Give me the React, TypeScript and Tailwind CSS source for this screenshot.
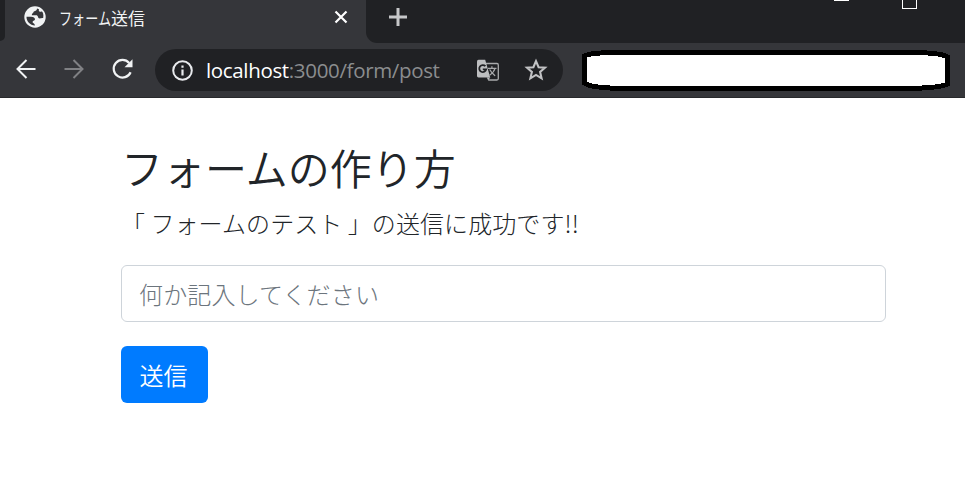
function Globe() {
  return (
    <svg className="h-[22px] w-[22px] shrink-0" viewBox="0 0 22 22">
      <circle cx="11" cy="11" r="10.7" fill="#f1f3f4" />
      <path d="M13 2.6 C13 4.4 11.6 5.2 9.8 5.4 C9.6 7.2 7.5 7.2 7.8 9.3 H12.2 C14.2 9.4 13.7 11.4 14.8 12.3 C16.2 12.8 17.4 11.6 19.2 12 C19.8 8.4 19 6.6 17.8 5.3 C17.2 6.2 15 6 14.8 4.6 C14.8 3.8 14.9 3.4 15 3.2Z" fill="#35363a" />
      <path d="M2.5 10.8 H7 C9.5 11 11.2 11.9 11 13.5 C10.6 15 8.8 14.3 8.6 16 C8.6 17.2 10.4 17 11 19.4 C6 19.3 2.4 15.6 2.5 10.8Z" fill="#35363a" />
    </svg>
  );
}

function Arrow({ className }: { className: string }) {
  return (
    <svg className={`h-5 w-5 shrink-0 ${className}`} viewBox="0 0 20 20" fill="none" stroke="currentColor" strokeWidth="2">
      <path d="M19.5 10 H1.8 M10.5 1 L1.5 10 L10.5 19" />
    </svg>
  );
}

function TabStrip() {
  return (
    <div className="flex h-[43px] bg-[#202124]">
      <div className="h-[43px] w-[5px] bg-[#35363a]">
        <div className="h-[41px] w-[5px] rounded-br-[5px] bg-[#202124]" />
      </div>
      <div className="flex h-[43px] w-[361px] bg-[#35363a] pt-[6px] pl-[19px]">
        <Globe />
        <div className="ml-[13px] flex h-[24px] w-[275px] text-[17px] leading-[24px] whitespace-nowrap text-[#f1f3f4]">
          <span className="w-[52px]"><span className="inline-block origin-left scale-x-[0.77]">フォーム</span></span>
          <span>送信</span>
        </div>
        <svg className="mt-[4px] h-[14px] w-[14px]" viewBox="0 0 14 14" stroke="#fff" strokeWidth="2.2">
          <path d="M1.5 1.5 L12.5 12.5 M12.5 1.5 L1.5 12.5" />
        </svg>
      </div>
      <div className="flex-1 bg-[#35363a]">
        <div className="flex h-[43px] rounded-bl-[11px] bg-[#202124]">
          <svg className="mt-[8px] ml-[23px] h-[18px] w-[18px]" viewBox="0 0 18 18" stroke="#c6c7c9" strokeWidth="3">
            <path d="M0 9 H18 M9 0 V18" />
          </svg>
          <div className="ml-[427px] h-px w-[15px] bg-white" />
          <div className="ml-[53px] h-[9px] w-[15px] border border-t-0 border-white" />
        </div>
      </div>
    </div>
  );
}

function Toolbar() {
  return (
    <div className="flex h-[55px] border-b border-[#28292c] bg-[#35363a] pt-[6px]">
      <div className="flex h-[42px] w-[155px] items-center pb-[2px] pl-[16px]">
        <Arrow className="text-[#f1f3f4]" />
        <Arrow className="ml-[28px] rotate-180 text-[#808184]" />
        <svg className="mt-px ml-[27px] h-[23px] w-[23px]" viewBox="0 0 23 23">
          <path d="M18.2 5 A8.8 8.8 0 1 0 19.6 14.2" fill="none" stroke="#f1f3f4" strokeWidth="2.2" />
          <path d="M21.5 1.3 V9.3 H13.5Z" fill="#f1f3f4" />
        </svg>
      </div>
      <div className="flex h-[42px] w-[408px] items-center rounded-full bg-[#202124] pl-[17px]">
        <svg className="h-[21px] w-[21px] shrink-0" viewBox="0 0 21 21">
          <circle cx="10.5" cy="10.5" r="9.3" fill="none" stroke="#e8eaed" strokeWidth="2" />
          <path d="M9.4 5.6 h2.2 v2.2 h-2.2Z M9.4 9.5 h2.2 v6 h-2.2Z" fill="#e8eaed" />
        </svg>
        <div className="ml-[13px] w-[271px] shrink-0 pb-px font-['Open_Sans','Noto_Sans',sans-serif] text-[20.5px] leading-[30px] tracking-[-0.34px] whitespace-nowrap text-[#8b8d8f]">
          <span className="text-white">localhost</span>:3000/form/post
        </div>
        <svg className="h-[23px] w-[23px] shrink-0" viewBox="0 0 23 23">
          <path d="M9 4.5 H20 Q21.3 4.5 21.3 6 V19.5 Q21.3 21 20 21 H11.2" fill="none" stroke="#a9aaac" strokeWidth="1.3" />
          <path d="M1.5 .7 H8.2 L13.2 18.4 H1.5 Q0 18.4 0 17 V2.2 Q0 .7 1.5 .7Z" fill="#bdbec0" />
          <path d="M9.8 18.4 h3.5 l-2.2 2.8Z" fill="#bdbec0" />
          <path d="M8.4 7.2 A3.5 3.5 0 1 0 9.2 10.3 H5.8" fill="none" stroke="#202124" strokeWidth="1.8" />
          <path d="M11 9.3 H19.5 M14.9 7.3 V9.3 M18 9.3 C17.2 12.4 15.2 14.4 12.6 16.2 M12.7 10.5 C14.3 13.6 16.1 15 18.2 16.8" fill="none" stroke="#a9aaac" strokeWidth="1.2" />
        </svg>
        <svg className="ml-[24px] h-[24px] w-[24px] shrink-0" viewBox="0 0 24 24">
          <path d="M12 3.2 L14.6 9.2 L21 9.7 L16.1 13.9 L17.6 20.3 L12 16.9 L6.4 20.3 L7.9 13.9 L3 9.7 L9.4 9.2Z" fill="none" stroke="#c1c2c4" strokeWidth="2.1" />
        </svg>
      </div>
      <svg className="mt-px ml-[19px] h-[41px] w-[369px]" viewBox="0 0 369 41" shapeRendering="crispEdges">
        <path d="M2.5 6 Q8 2.5 38 2.5 H328 Q359 2.5 365.5 7 V34 Q357 38.5 318 38.5 H48 Q9 38.5 2.5 33Z" fill="#fff" stroke="#000" strokeWidth="5" />
      </svg>
    </div>
  );
}

export default function App() {
  return (
    <div className="h-[490px] w-[965px] overflow-hidden bg-white font-['Noto_Sans_CJK_JP',sans-serif] text-[#212529]">
      <TabStrip />
      <Toolbar />
      <main className="ml-[121px] w-[765px] pt-[44px]">
        <h1 className="h-[63px] text-[42px] leading-[50px] font-[350]">フォームの作り方</h1>
        <p className="h-[60px] text-[24px] leading-[36px] font-light tracking-[0.08px] whitespace-pre">「 フォームのテスト 」の送信に成功です!!</p>
        <input
          className="block h-[57px] w-full rounded-[6px] border border-[#ced4da] px-[17px] pb-px text-[24px] font-light tracking-[0.15px] outline-none placeholder:text-[#6c757d]"
          placeholder="何か記入してください"
        />
        <button className="mt-[24px] h-[57px] w-[87px] rounded-[6px] bg-[#007bff] pr-[2px] text-[24px] font-[350] text-white">送信</button>
      </main>
    </div>
  );
}
